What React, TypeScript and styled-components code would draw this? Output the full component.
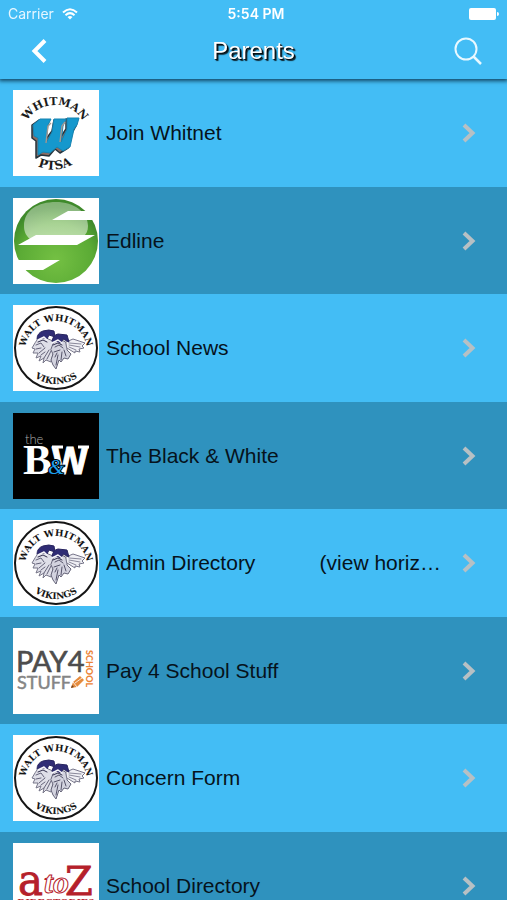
import React from "react";
import styled, { createGlobalStyle } from "styled-components";

const GlobalStyle = createGlobalStyle`
  * { box-sizing: border-box; }
  body { margin: 0; background: #43bdf5; font-family: "Liberation Sans", Arial, sans-serif; }
`;

const Screen = styled.div`
  display: flex;
  flex-direction: column;
  height: 100vh;
  overflow: hidden;
`;

const Header = styled.header`
  position: relative;
  z-index: 1;
  flex: none;
  background: #43bdf5;
  color: #fff;
  box-shadow: 0 1px 4px 1px rgba(0, 30, 50, 0.75);
`;

const StatusBar = styled.div`
  display: grid;
  grid-template-columns: 1fr auto 1fr;
  align-items: center;
  height: 27px;
  padding: 0 8px;
  font-family: Inter, Roboto, sans-serif;
  font-size: 14px;
  line-height: 16px;
`;

const Carrier = styled.div`
  display: flex;
  align-items: center;
  gap: 8px;
  color: #e6f6ff;
`;

const Clock = styled.time`
  font-weight: 600;
  padding-left: 5px;
`;

const Battery = styled.svg`
  justify-self: end;
`;

const NavBar = styled.nav`
  display: grid;
  grid-template-columns: 62px 1fr 62px;
  align-items: center;
  height: 52px;
  padding: 0 8px 4px;
`;

const IconButton = styled.button`
  display: flex;
  justify-content: center;
  align-items: center;
  height: 48px;
  padding: 0;
  border: 0;
  background: none;
  color: #fff;
  cursor: pointer;
`;

const Title = styled.h1`
  margin: 0;
  font-size: 24px;
  line-height: 28px;
  font-weight: 400;
  text-align: center;
  text-shadow: 1px 1px 1px #000, 2px 2px 1px rgba(0, 0, 0, 0.8);
`;

const List = styled.ul`
  flex: 1;
  min-height: 0;
  margin: 0;
  padding: 0;
  list-style: none;
  overflow-y: auto;
  scrollbar-width: none;
`;

const Item = styled.li`
  background: #43bdf5;
  height: 108px;

  &:nth-child(even) {
    background: #2f92be;
    height: 107px;
  }
`;

const RowLink = styled.a`
  display: flex;
  align-items: center;
  height: 100%;
  padding: 0 31px 0 13px;
  color: #06131c;
  text-decoration: none;
`;

const Thumb = styled.svg<{ $dark?: boolean }>`
  flex: none;
  width: 86px;
  height: 86px;
  background: ${(p) => (p.$dark ? "#000" : "#fff")};
`;

const Label = styled.span`
  flex: 1;
  min-width: 0;
  margin: 0 20px 0 7px;
  font-size: 21px;
  line-height: 28px;
  white-space: pre;
  overflow: hidden;
  text-overflow: ellipsis;
`;

const Chevron = styled.svg`
  flex: none;
  color: #b7c0c4;
`;

const serif = '"Liberation Serif", serif';
const slab = '"DejaVu Serif", serif';

function PtsaLogo() {
  return (
    <Thumb viewBox="0 0 86 86" aria-hidden="true">
      <defs>
        <path id="ptsa-top" d="M11 44A31 29 0 0 1 73 44" />
        <path id="ptsa-bottom" d="M20 74Q42 86 64 72" />
      </defs>
      <g fontFamily={slab} fontWeight="700" fill="#1b1b1b" textAnchor="middle">
        <text fontSize="11"><textPath href="#ptsa-top" startOffset="50%">WHITMAN</textPath></text>
        <text fontSize="12"><textPath href="#ptsa-bottom" startOffset="50%">PTSA</textPath></text>
      </g>
      <path
        d="M20 35L27 30H37L35 36L34 49L40 41L42 30H51L48 36L48 48L54 39L54 29H65L64 36L60 43L56 58L48 63L43 59L37 66L29 65L24 68L24 51L20 48Z"
        fill="#8b6b62" stroke="#26333b" strokeWidth="1.5" strokeLinejoin="round" transform="translate(-1 0)"
      />
      <path
        d="M20 35L27 29H38L35 35L33 53L39 42L41 29H53L50 36L48 52L54 39L54 28H66L64 35L61 39L57 57L50 61L44 57L37 63L30 62L25 65L25 48L21 46Z"
        fill="#1598cd" stroke="#1683b1" strokeWidth="1" strokeLinejoin="round"
      />
      <path d="M33 53L35 36L38 33M47 52L49 36L52 32" stroke="#a39a94" strokeWidth="1.4" fill="none" />
    </Thumb>
  );
}

function EdlineLogo() {
  return (
    <Thumb viewBox="0 0 86 86" aria-hidden="true">
      <defs>
        <radialGradient id="edline-ball" cx="50%" cy="72%" r="62%">
          <stop offset="0" stopColor="#74c043" />
          <stop offset="0.7" stopColor="#5bab35" />
          <stop offset="1" stopColor="#3f8a2b" />
        </radialGradient>
        <linearGradient id="edline-shine" x1="0" y1="0" x2="0" y2="1">
          <stop offset="0" stopColor="#fff" stopOpacity="0.35" />
          <stop offset="1" stopColor="#fff" stopOpacity="0.55" />
        </linearGradient>
      </defs>
      <circle cx="43" cy="43" r="42" fill="url(#edline-ball)" />
      <path d="M11 28C11 12 25 4 43 4S75 14 75 28C75 33 73 36 71 38H23L17 41C12 37 11 32 11 28Z" fill="url(#edline-shine)" />
      <path d="M39 22L55 13H80L86 22ZM5 47L23 37H82L64 47ZM0 62H47L30 72H12L0 66Z" fill="#fff" />
    </Thumb>
  );
}

function VikingsLogo({ id }: { id: string }) {
  return (
    <Thumb viewBox="0 0 86 86" aria-hidden="true">
      <defs>
        <path id={`${id}-top`} d="M12 47A31 31 0 0 1 74 47" />
        <path id={`${id}-bottom`} d="M5 41A38 38 0 0 0 81 41" />
      </defs>
      <circle cx="43" cy="43" r="41" fill="#fff" stroke="#151515" strokeWidth="2" />
      <g fontFamily={slab} fontWeight="700" fill="#151515" textAnchor="middle">
        <text fontSize="9"><textPath href={`#${id}-top`} startOffset="50%">WALT WHITMAN</textPath></text>
        <text fontSize="9"><textPath href={`#${id}-bottom`} startOffset="50%">VIKINGS</textPath></text>
      </g>
      <g strokeLinejoin="round" strokeLinecap="round">
        <path d="M25 34L33 33L40 36L43 42L40 49L38 57L33 55L30 58L31 53L26 56L28 51L23 53L25 48L20 48L22 44L19 43L22 38Z" fill="#dfdfe8" stroke="#777689" />
        <path d="M41 37L49 35L54 38L54 45L58 49L55 54L51 53L48 57L46 55L43 64L40 60L38 55L40 49L38 45Z" fill="#d3d3df" stroke="#666579" />
        <path d="M23 40L28 38L31 42M23 44L28 43M26 48L32 43M31 53L36 45M34 54L38 46M28 50L32 47" fill="none" stroke="#65637a" />
        <path d="M42 42L46 40L50 43M41 47L47 45M42 52L44 48M43 60L45 50M48 55L49 47M53 51L51 45" fill="none" stroke="#55536a" />
        <path d="M53 37L60 34L72 38L69 41L71 43L66 44L67 47L62 46L62 48L54 43Z" fill="#efeff4" stroke="#77768a" />
        <path d="M56 38L68 39M56 40L67 42M56 42L63 45" stroke="#8a899b" fill="none" />
        <path d="M24 34Q24 28 30 26Q36 24 41 26L42 32L36 30L34 34L30 32Z" fill="#2f2c75" stroke="#27245f" />
        <path d="M39 36Q40 30 45 29L54 30L56 37L50 34L48 38L43 36Z" fill="#2f2c75" stroke="#27245f" />
        <path d="M25 35L31 32L34 35M39 38L45 35L49 38" stroke="#f5f5fb" strokeWidth="1.5" fill="none" />
        <path d="M25 37L30 35L34 37M40 40L45 38L49 40" stroke="#35324f" fill="none" />
      </g>
    </Thumb>
  );
}

function BlackWhiteLogo() {
  return (
    <Thumb viewBox="0 0 86 86" $dark aria-hidden="true">
      <text x="12" y="31" fontFamily="Lato, sans-serif" fontWeight="300" fontSize="13" fill="#aaa">the</text>
      <text x="10" y="61" fontFamily={serif} fontWeight="700" fontSize="43" fill="#fff">B</text>
      <text x="39" y="61" fontFamily='"Liberation Sans", sans-serif' fontWeight="700" fontSize="38" fill="#fff" stroke="#fff">W</text>
      <path d="M39 34H50M65 34H76" stroke="#fff" strokeWidth="3" />
      <text x="35" y="61" fontFamily={serif} fontStyle="italic" fontSize="21" fill="#1e9fee" stroke="#000" strokeWidth="2" paintOrder="stroke">&amp;</text>
    </Thumb>
  );
}

function PayLogo() {
  return (
    <Thumb viewBox="0 0 86 86" aria-hidden="true">
      <text x="3" y="44" fontFamily="Lato, sans-serif" fontSize="29" fill="#4d4d4d" stroke="#4d4d4d" strokeWidth="0.6">PAY4</text>
      <text x="4" y="61" fontFamily="Lato, sans-serif" fontSize="18" fill="#858585" stroke="#858585" strokeWidth="0.5">STUFF</text>
      <text transform="translate(73 22) rotate(90)" fontFamily="Lato, sans-serif" fontWeight="900" fontSize="9" fill="#ec8436">SCHOOL</text>
      <path d="M58 60L60 54L67 48L71 52L64 59Z" fill="#e58b3d" />
      <path d="M60 54L64 59M62 55L69 50" stroke="#fff" strokeWidth="0.8" />
      <path d="M58 60L59 57L61 59Z" fill="#704322" />
    </Thumb>
  );
}

function AtoZLogo() {
  return (
    <Thumb viewBox="0 0 86 86" aria-hidden="true">
      <g fontFamily={slab} fill="#b5202a">
        <text x="5" y="52" fontSize="42" stroke="#b5202a" strokeWidth="0.8">a</text>
        <text x="52" y="52" fontSize="40" stroke="#b5202a" strokeWidth="0.8">Z</text>
        <text x="31" y="50" fontFamily={serif} fontStyle="italic" fontWeight="700" fontSize="32" fill="#fff" stroke="#b5202a" strokeWidth="1">to</text>
        <text x="43" y="63" fontFamily={serif} fontWeight="700" fontSize="11" textAnchor="middle">DIRECTORIES</text>
      </g>
    </Thumb>
  );
}

const entries: { label: string; href: string; logo: React.ReactNode }[] = [
  { label: "Join Whitnet", href: "#whitnet", logo: <PtsaLogo /> },
  { label: "Edline", href: "#edline", logo: <EdlineLogo /> },
  { label: "School News", href: "#news", logo: <VikingsLogo id="news" /> },
  { label: "The Black & White", href: "#black-white", logo: <BlackWhiteLogo /> },
  { label: "Admin Directory" + " ".repeat(11) + "(view horizontally)", href: "#admin", logo: <VikingsLogo id="admin" /> },
  { label: "Pay 4 School Stuff", href: "#pay", logo: <PayLogo /> },
  { label: "Concern Form", href: "#concern", logo: <VikingsLogo id="concern" /> },
  { label: "School Directory", href: "#directory", logo: <AtoZLogo /> },
];

export default function App() {
  return (
    <>
      <GlobalStyle />
      <Screen>
        <Header>
          <StatusBar>
            <Carrier>
              Carrier
              <svg width="16" height="12" viewBox="0 0 16 12" fill="none" stroke="#fff" strokeWidth="2" aria-hidden="true">
                <path d="M1 4.500Q8 -2 15 4.500M3.500 7.200Q8 3 12.500 7.200" />
                <path d="M8 11.500L5.500 9Q8 7 10.500 9Z" fill="#fff" stroke="none" />
              </svg>
            </Carrier>
            <Clock>5:54 PM</Clock>
            <Battery width="30" height="12" viewBox="0 0 30 12" fill="#fff" aria-hidden="true">
              <rect width="27" height="12" rx="2" />
              <path d="M28 4Q30 4 30 6T28 8Z" />
            </Battery>
          </StatusBar>
          <NavBar>
            <IconButton type="button" aria-label="Back">
              <svg width="16" height="24" viewBox="0 0 16 24" fill="none" stroke="currentColor" strokeWidth="4">
                <path d="M14 1.500L3.500 12L14 22.500" />
              </svg>
            </IconButton>
            <Title>Parents</Title>
            <IconButton type="button" aria-label="Search">
              <svg width="28" height="28" viewBox="0 0 28 28" fill="none" stroke="#e8f8ff" strokeWidth="2">
                <circle cx="12" cy="12" r="10.500" />
                <path d="M19 19L27 27" strokeWidth="2.500" />
              </svg>
            </IconButton>
          </NavBar>
        </Header>
        <List>
          {entries.map((e) => (
            <Item key={e.href}>
              <RowLink href={e.href}>
                {e.logo}
                <Label>{e.label}</Label>
                <Chevron width="14" height="20" viewBox="0 0 14 20" fill="none" stroke="currentColor" strokeWidth="4" aria-hidden="true">
                  <path d="M2 2L10.500 10L2 18" />
                </Chevron>
              </RowLink>
            </Item>
          ))}
        </List>
      </Screen>
    </>
  );
}
